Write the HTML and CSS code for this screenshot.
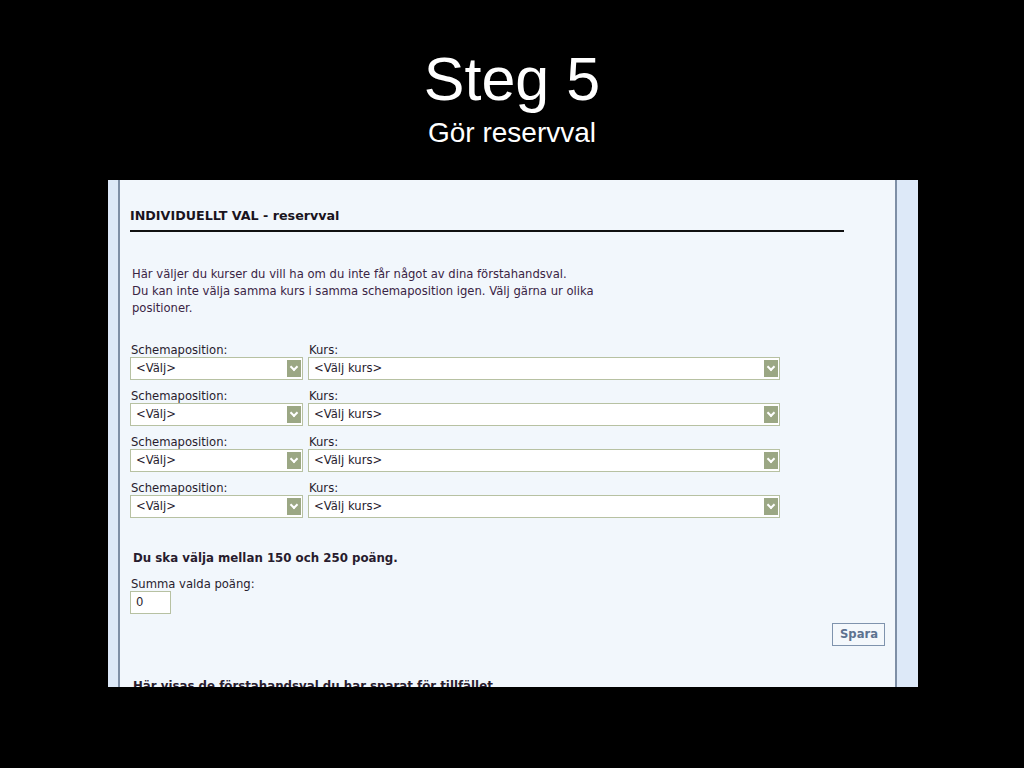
FILE: index.html
```html
<!doctype html>
<html lang="sv">
<head>
  <meta charset="UTF-8">
  <title>Steg 5 - Gör reservval</title>
  <link rel="stylesheet" href="styles.css">
</head>
<body>
  <div class="slide">
    <div class="title">
      <h1>Steg 5</h1>
      <p>Gör reservval</p>
    </div>
    <div class="shot">
      <div class="side left"></div>
      <div class="page">
        <h2 class="heading">INDIVIDUELLT VAL - reservval</h2>
        <p class="intro">Här väljer du kurser du vill ha om du inte får något av dina förstahandsval.<br>
          Du kan inte välja samma kurs i samma schemaposition igen. Välj gärna ur olika<br>
          positioner.</p>
        <div class="rows">
          <div class="row">
            <div class="field pos"><span>Schemaposition:</span><div class="select">&lt;Välj&gt;<i></i></div></div>
            <div class="field course"><span>Kurs:</span><div class="select">&lt;Välj kurs&gt;<i></i></div></div>
          </div>
          <div class="row">
            <div class="field pos"><span>Schemaposition:</span><div class="select">&lt;Välj&gt;<i></i></div></div>
            <div class="field course"><span>Kurs:</span><div class="select">&lt;Välj kurs&gt;<i></i></div></div>
          </div>
          <div class="row">
            <div class="field pos"><span>Schemaposition:</span><div class="select">&lt;Välj&gt;<i></i></div></div>
            <div class="field course"><span>Kurs:</span><div class="select">&lt;Välj kurs&gt;<i></i></div></div>
          </div>
          <div class="row">
            <div class="field pos"><span>Schemaposition:</span><div class="select">&lt;Välj&gt;<i></i></div></div>
            <div class="field course"><span>Kurs:</span><div class="select">&lt;Välj kurs&gt;<i></i></div></div>
          </div>
        </div>
        <p class="rule">Du ska välja mellan 150 och 250 poäng.</p>
        <div class="sum">
          <span>Summa valda poäng:</span>
          <div class="box">0</div>
        </div>
        <div class="actions"><span class="btn">Spara</span></div>
        <p class="saved">Här visas de förstahandsval du har sparat för tillfället.</p>
      </div>
      <div class="side right"></div>
    </div>
  </div>
</body>
</html>
```

FILE: styles.css
```css
body {
  margin: 0;
  background: #000;
}
.slide {
  width: 1024px;
  height: 768px;
}
.title {
  text-align: center;
  color: #fff;
  font-family: "Liberation Sans", Arial, sans-serif;
  padding-top: 46px;
  height: 180px;
  box-sizing: border-box;
}
.title h1 {
  margin: 0;
  font-size: 61px;
  font-weight: normal;
  line-height: 66px;
}
.title p {
  margin: 8px 0 0;
  font-size: 28px;
  line-height: 26px;
}
.shot {
  display: flex;
  width: 810px;
  height: 507px;
  margin-left: 108px;
  overflow: hidden;
  background: #f2f7fc;
  font-family: Tahoma, "DejaVu Sans", sans-serif;
  font-size: 11.6px;
  color: #281c2e;
}
.side {
  background: #dde9f8;
}
.side.left {
  width: 10px;
  border-right: 2px solid #7e8fa6;
}
.side.right {
  width: 21px;
  margin-left: auto;
  border-left: 2px solid #7e8fa6;
}
.page {
  width: 760px;
  padding: 24px 0 0 10px;
}
.heading {
  margin: 0;
  width: 714px;
  font-size: 12.7px;
  font-weight: bold;
  padding: 4px 0 7px 0;
  border-bottom: 2px solid #111;
  color: #1a1420;
}
.intro {
  margin: 34px 0 0 2px;
  line-height: 17px;
  color: #3a2444;
}
.rows {
  margin-top: 26px;
}
.row {
  display: flex;
  gap: 5px;
  height: 46px;
}
.field span {
  display: block;
  line-height: 14px;
  padding-left: 1px;
}
.pos {
  width: 173px;
}
.course {
  width: 472px;
}
.select {
  position: relative;
  height: 21px;
  line-height: 21px;
  border: 1px solid #b7c1a2;
  background: #fff;
  padding-left: 5px;
}
.select i {
  position: absolute;
  right: 1px;
  top: 2px;
  width: 14px;
  height: 17px;
  background: #9ba784;
}
.select i::after {
  content: "";
  position: absolute;
  left: 4px;
  top: 4px;
  width: 4px;
  height: 4px;
  border-right: 2px solid #fff;
  border-bottom: 2px solid #fff;
  transform: rotate(45deg);
}
.rule {
  margin: 24px 0 0 3px;
  font-weight: bold;
  font-size: 11.8px;
}
.sum {
  margin-top: 12px;
}
.sum span {
  display: block;
  line-height: 14px;
  padding-left: 1px;
}
.box {
  width: 34px;
  height: 21px;
  line-height: 21px;
  border: 1px solid #b7c1a2;
  background: #fff;
  padding-left: 5px;
}
.actions {
  display: flex;
  justify-content: flex-end;
  margin-top: 9px;
  width: 755px;
}
.btn {
  border: 1px solid #7f93ad;
  padding: 3px 6px 4px 7px;
  font-weight: bold;
  font-size: 11.6px;
  color: #5d7290;
  background: #f4f8fc;
}
.saved {
  margin: 33px 0 0 3px;
  font-weight: bold;
  font-size: 11.8px;
}
```
